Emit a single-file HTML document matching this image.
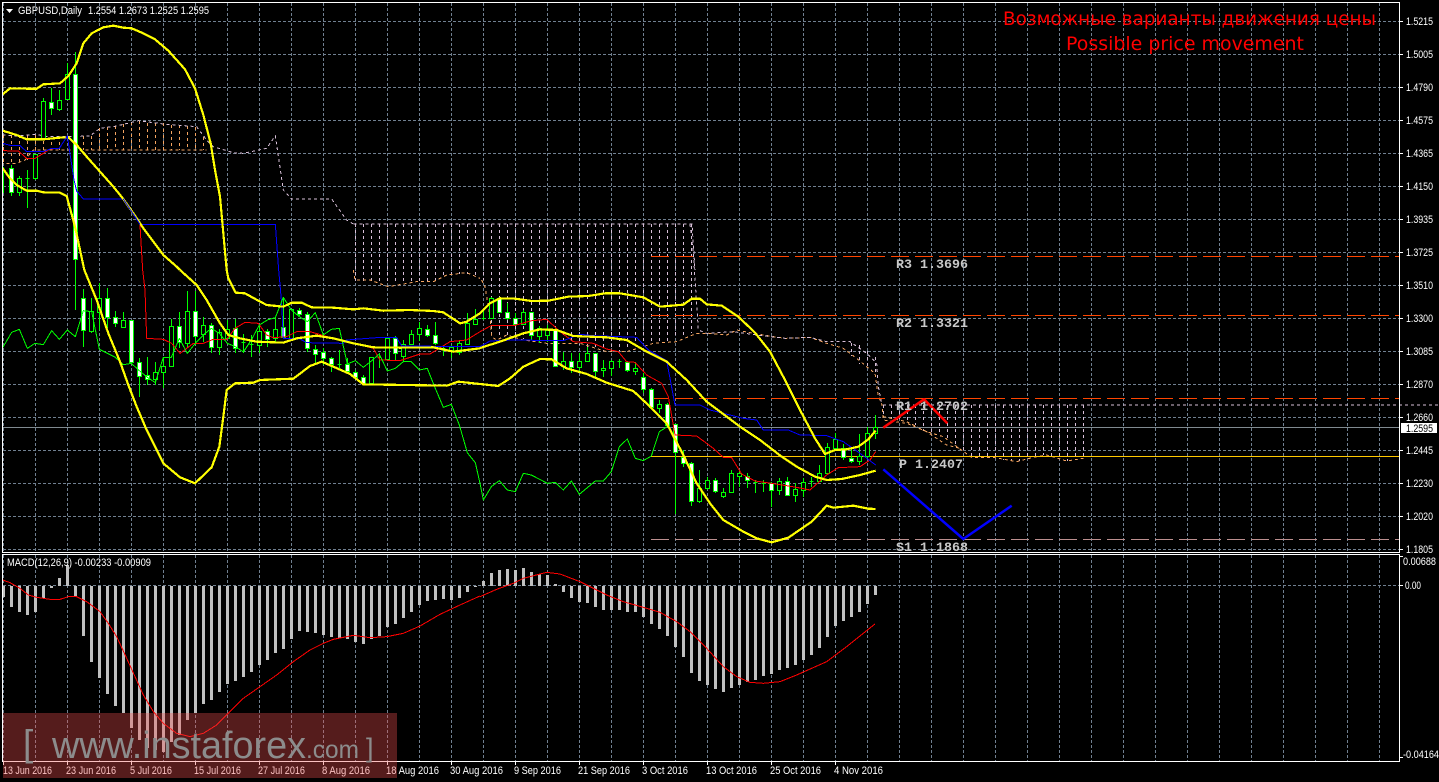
<!DOCTYPE html>
<html><head><meta charset="utf-8"><title>GBPUSD,Daily</title>
<style>
html,body{margin:0;padding:0;background:#000;width:1439px;height:782px;overflow:hidden}
svg{display:block;position:absolute;left:0;top:0}
polyline{fill:none;vector-effect:non-scaling-stroke;stroke-linejoin:round}
.y{stroke:#ff0;stroke-width:2.2px}.r{stroke:#f00;stroke-width:1px}.b{stroke:#00f;stroke-width:1px}.g{stroke:#0f0;stroke-width:1px}
.th{stroke:#d8bfd8;stroke-width:1px;stroke-dasharray:3 3}.sa{stroke:#f4a460;stroke-width:1px;stroke-dasharray:3 3}
text{font-family:"Liberation Sans",sans-serif;fill:#fff;font-size:11px}
.p{font-family:"Liberation Mono",monospace;font-weight:bold;font-size:13.33px;fill:#c8c8c8}
.t{font-family:"DejaVu Sans",sans-serif;font-size:19px;fill:#f00}
.w{fill:#8c8c8c;font-size:38px}
</style></head><body>
<svg width="1439" height="782" viewBox="0 0 1439 782" xmlns="http://www.w3.org/2000/svg">
<rect width="1439" height="782" fill="#000"/>
<g shape-rendering="crispEdges">
<path stroke="#708090" stroke-width="1" stroke-dasharray="3 2" fill="none" d="M3 21.5H1399M3 54.5H1399M3 87.5H1399M3 120.5H1399M3 153.5H1399M3 186.5H1399M3 219.5H1399M3 252.5H1399M3 285.5H1399M3 318.5H1399M3 351.5H1399M3 384.5H1399M3 417.5H1399M3 450.5H1399M3 483.5H1399M3 516.5H1399M3 549.5H1399M3 585.5H1399
M3.5 3V552M35.5 3V552M67.5 3V552M99.5 3V552M131.5 3V552M163.5 3V552M195.5 3V552M227.5 3V552M259.5 3V552M291.5 3V552M323.5 3V552M355.5 3V552M387.5 3V552M419.5 3V552M451.5 3V552M483.5 3V552M515.5 3V552M547.5 3V552M579.5 3V552M611.5 3V552M643.5 3V552M675.5 3V552M707.5 3V552M739.5 3V552M771.5 3V552M803.5 3V552M835.5 3V552M867.5 3V552M899.5 3V552M931.5 3V552M963.5 3V552M995.5 3V552M1027.5 3V552M1059.5 3V552M1091.5 3V552M1123.5 3V552M1155.5 3V552M1187.5 3V552M1219.5 3V552M1251.5 3V552M1283.5 3V552M1315.5 3V552M1347.5 3V552M1379.5 3V552
M3.5 555V761M35.5 555V761M67.5 555V761M99.5 555V761M131.5 555V761M163.5 555V761M195.5 555V761M227.5 555V761M259.5 555V761M291.5 555V761M323.5 555V761M355.5 555V761M387.5 555V761M419.5 555V761M451.5 555V761M483.5 555V761M515.5 555V761M547.5 555V761M579.5 555V761M611.5 555V761M643.5 555V761M675.5 555V761M707.5 555V761M739.5 555V761M771.5 555V761M803.5 555V761M835.5 555V761M867.5 555V761M899.5 555V761M931.5 555V761M963.5 555V761M995.5 555V761M1027.5 555V761M1059.5 555V761M1091.5 555V761M1123.5 555V761M1155.5 555V761M1187.5 555V761M1219.5 555V761M1251.5 555V761M1283.5 555V761M1315.5 555V761M1347.5 555V761M1379.5 555V761"/>

<!-- kumo verticals -->
<path stroke="#f4a460" stroke-width="1" stroke-dasharray="3 3" fill="none" d="M3.5 135V163M11.5 135V163M19.5 135V163M27.5 135V160M35.5 135V150M43.5 135V150M51.5 142V150M59.5 142V150M83.5 136V150M91.5 136V150M99.5 128V150M107.5 127V150M115.5 126V150M123.5 124V150M131.5 122V150M139.5 121V150M147.5 123V150M155.5 123V150M163.5 123V150M171.5 125V150M179.5 125V150M187.5 126V150M195.5 127V150M203.5 137V150"/>
<path stroke="#d8bfd8" stroke-width="1" stroke-dasharray="3 3" fill="none" d="M355.5 224V281M363.5 224V282M371.5 224V282M379.5 224V282M387.5 224V284M395.5 224V283M403.5 224V282M411.5 224V282M419.5 224V282M427.5 224V282M435.5 224V280M443.5 224V278M451.5 224V276M459.5 224V274M467.5 224V274M475.5 224V278M483.5 224V280M491.5 224V334M499.5 224V338M507.5 224V336M515.5 224V338M523.5 224V339M531.5 224V340M539.5 224V342M547.5 224V343M555.5 224V343M563.5 224V343M571.5 224V343M579.5 224V345M587.5 224V347M595.5 224V350M603.5 224V351M611.5 224V351M619.5 224V351M627.5 224V348M635.5 224V346M643.5 224V344M651.5 224V343M659.5 224V342M667.5 224V341M675.5 224V338M683.5 224V335M691.5 224V333
M883.5 405V417M891.5 405V418M899.5 405V419M907.5 405V421M915.5 405V425M923.5 405V431M931.5 405V434M939.5 405V435M947.5 405V440M955.5 405V447M963.5 405V452M971.5 405V457M979.5 405V458M987.5 405V458M995.5 405V459M1003.5 405V460M1011.5 405V461M1019.5 405V461M1027.5 405V459M1035.5 405V457M1043.5 405V455M1051.5 405V456M1059.5 405V459M1067.5 405V461M1075.5 405V460M1083.5 405V458
M851.5 343V356M859.5 345V364M867.5 351V368M875.5 357V373"/>

<g fill="none" transform="scale(.33333)">
<polyline class="th" points="8,405 50,408 110,403 140,410 200,410 270,408 300,385 350,378 415,362 490,372 590,380 620,420 640,440 700,458 730,460 800,445 826,407 850,570 875,597 995,597 1040,660 1060,672"/>
<polyline class="sa" points="8,430 8,490 50,490 75,480 100,450 300,450 620,450"/>
<polyline class="th" points="1060,672 2076,672 2076,672 2085,810"/>
<polyline class="th" points="2649,1215 4449,1215 4449,1377"/>
</g>
<g transform="translate(480,200) scale(.33333)">
<polyline class="sa" points="5,240 15,260 30,350 35,410 50,420 80,405 130,420 200,430 300,430 380,455 440,455 490,440 520,430 590,425 650,400 680,400 740,405 770,390 820,400 880,410 915,415 990,412 1040,430 1090,445 1130,475 1160,500 1185,520 1195,590 1205,610 1210,660 1280,670 1340,695 1400,735 1440,745"/>
<polyline class="th" points="630,72 640,160 655,390 680,400 760,395 830,405 915,415 990,412 1040,425 1090,425 1110,425 1160,460 1190,490 1195,560 1205,610"/>
</g>
<g transform="translate(0,270) scale(.33333)">
<polyline class="sa" points="1060,0 1065,30 1110,30 1165,50 1250,35 1300,35 1340,15 1400,8 1440,25"/>
</g>
<g transform="translate(800,380) scale(.33333)">
<polyline class="sa" points="250,110 320,125 380,155 430,170 470,200 515,232 580,232 650,245 700,232 740,225 800,243 850,235"/>
</g>

<!-- levels -->
<path stroke="#808a90" stroke-width="1" d="M3 427.5H1399"/>
<path stroke="#ff4500" stroke-width="1" stroke-dasharray="18 6" fill="none" d="M651 256.5H1399M651 315.5H1399M651 398.5H1399"/>
<path stroke="#bc8f8f" stroke-width="1" stroke-dasharray="18 6" fill="none" d="M651 539.5H1399"/>
<path stroke="#ffc800" stroke-width="1" d="M651 456.5H1399"/>

<!-- wicks -->
<path stroke="#0f0" stroke-width="1" fill="none" d="M3.5 167V193M11.5 165V196M19.5 176V196M27.5 170V208M25.5 178.5h4M35.5 154V180M43.5 98V138M51.5 88V115M59.5 90V111M67.5 63V100M75.5 52V310M83.5 289V347M91.5 298V333M99.5 283V330M107.5 288V328M115.5 311V327M123.5 312V327M131.5 320V362M139.5 358V397M147.5 357V385M155.5 362V385M163.5 357V388M171.5 319V366M179.5 312V348M187.5 291V348M195.5 291V345M203.5 317V342M211.5 323V353M219.5 329V355M227.5 320V338M235.5 319V353M243.5 334V353M241.5 342.5h4M251.5 335V357M249.5 344.5h4M259.5 325V353M267.5 329V347M275.5 318V342M283.5 297V338M291.5 309V338M299.5 308V316M307.5 312V352M315.5 345V363M323.5 348V365M331.5 357V372M339.5 350V368M337.5 364.5h4M347.5 358V372M355.5 370V378M363.5 375V384M371.5 357V384M379.5 353V368M377.5 357.5h4M387.5 338V360M395.5 336V360M403.5 340V361M411.5 330V345M419.5 322V341M427.5 325V337M435.5 322V345M443.5 345V356M441.5 348.5h4M451.5 345V358M459.5 341V355M467.5 313V345M475.5 309V325M483.5 310V320M481.5 318.5h4M491.5 297V318M499.5 297V313M507.5 303V320M515.5 313V324M523.5 310V325M531.5 312V340M539.5 326V343M547.5 325V342M555.5 328V366M563.5 352V370M571.5 353V373M579.5 353V373M587.5 347V362M595.5 353V378M603.5 360V377M611.5 360V376M619.5 359V368M617.5 361.5h4M627.5 362V372M635.5 362V375M643.5 373V393M651.5 388V408M659.5 400V413M667.5 403V427M675.5 424V514M683.5 450V467M691.5 462V506M699.5 470V503M707.5 477V490M715.5 478V493M723.5 488V498M731.5 470V493M739.5 470V487M747.5 473V488M755.5 480V493M753.5 482.5h4M763.5 480V492M761.5 483.5h4M771.5 482V507M779.5 478V495M787.5 477V496M795.5 483V502M803.5 478V497M811.5 477V487M809.5 481.5h4M819.5 465V482M827.5 443V473M835.5 433V448M843.5 444V460M851.5 448V463M859.5 434V465M867.5 427V458M875.5 415V439"/>
<!-- white bodies -->
<path stroke="#0f0" stroke-width="1" fill="#fff" d="M9.5 168.5h4v24h-4zM49.5 102.5h4v6h-4zM73.5 74.5h4v185h-4zM81.5 298.5h4v32h-4zM105.5 298.5h4v19h-4zM113.5 317.5h4v6h-4zM129.5 320.5h4v42h-4zM137.5 362.5h4v14h-4zM145.5 375.5h4v4h-4zM177.5 326.5h4v16h-4zM193.5 311.5h4v25h-4zM209.5 325.5h4v22h-4zM233.5 328.5h4v20h-4zM265.5 331.5h4v8h-4zM281.5 327.5h4v10h-4zM297.5 310.5h4v4h-4zM305.5 314.5h4v34h-4zM313.5 349.5h4v5h-4zM321.5 352.5h4v6h-4zM329.5 358.5h4v6h-4zM345.5 364.5h4v7h-4zM353.5 372.5h4v5h-4zM361.5 377.5h4v6h-4zM393.5 338.5h4v15h-4zM425.5 329.5h4v6h-4zM433.5 335.5h4v8h-4zM497.5 298.5h4v14h-4zM505.5 312.5h4v6h-4zM513.5 318.5h4v6h-4zM529.5 312.5h4v23h-4zM553.5 329.5h4v37h-4zM569.5 361.5h4v6h-4zM593.5 353.5h4v18h-4zM625.5 362.5h4v8h-4zM641.5 377.5h4v12h-4zM649.5 389.5h4v18h-4zM665.5 404.5h4v21h-4zM673.5 424.5h4v28h-4zM681.5 457.5h4v6h-4zM689.5 463.5h4v38h-4zM713.5 480.5h4v11h-4zM745.5 476.5h4v4h-4zM769.5 483.5h4v7h-4zM785.5 481.5h4v14h-4zM841.5 448.5h4v9h-4zM849.5 458.5h4v3h-4z"/>
<!-- hollow bodies -->
<path stroke="#0f0" stroke-width="1" fill="#000" d="M17.5 178.5h4v14h-4zM33.5 154.5h4v24h-4zM41.5 101.5h4v37h-4zM57.5 100.5h4v9h-4zM65.5 74.5h4v25h-4zM89.5 311.5h4v20h-4zM97.5 298.5h4v14h-4zM121.5 320.5h4v7h-4zM153.5 372.5h4v7h-4zM161.5 366.5h4v6h-4zM169.5 326.5h4v40h-4zM185.5 311.5h4v32h-4zM201.5 325.5h4v9h-4zM217.5 332.5h4v15h-4zM225.5 329.5h4v9h-4zM257.5 331.5h4v14h-4zM273.5 329.5h4v9h-4zM289.5 309.5h4v29h-4zM369.5 357.5h4v26h-4zM385.5 338.5h4v21h-4zM401.5 344.5h4v12h-4zM409.5 334.5h4v10h-4zM417.5 328.5h4v6h-4zM449.5 347.5h4v3h-4zM457.5 343.5h4v9h-4zM465.5 323.5h4v21h-4zM473.5 319.5h4v5h-4zM489.5 298.5h4v20h-4zM521.5 312.5h4v12h-4zM537.5 328.5h4v8h-4zM545.5 330.5h4v5h-4zM561.5 361.5h4v5h-4zM577.5 361.5h4v6h-4zM585.5 353.5h4v8h-4zM601.5 368.5h4v2h-4zM609.5 361.5h4v7h-4zM633.5 368.5h4v3h-4zM657.5 404.5h4v4h-4zM697.5 488.5h4v13h-4zM705.5 480.5h4v8h-4zM721.5 492.5h4v4h-4zM729.5 473.5h4v19h-4zM737.5 473.5h4v3h-4zM777.5 481.5h4v9h-4zM793.5 489.5h4v6h-4zM801.5 482.5h4v8h-4zM817.5 473.5h4v8h-4zM825.5 447.5h4v26h-4zM833.5 439.5h4v9h-4zM857.5 456.5h4v5h-4zM865.5 433.5h4v23h-4zM873.5 427.5h4v6h-4z"/>

<!-- indicators, thin -->
<g transform="scale(.33333)">
<polyline class="r" points="8,452 55,453 80,475 105,475 130,460 150,447 178,445"/>
<polyline class="r" points="420,675 428,810"/>
<polyline class="b" points="8,430 30,436 60,437 80,455 130,455 155,445 178,445 202,408 222,540 230,573 250,597 370,597 420,673 826,673 836,810"/>
</g>
<g transform="translate(0,270) scale(.33333)">
<polyline class="r" points="428,0 435,60 440,205 490,208 515,220 540,250 580,220 610,220 640,208 680,208 705,175 735,157 775,160 800,195 820,203 860,200 890,185 930,185 1000,205 1060,220 1120,235 1140,270 1200,272 1260,252 1290,252 1350,215 1400,210 1440,185"/>
<polyline class="b" points="836,0 845,100 850,205 900,207 920,218 1030,220 1040,210 1130,203 1190,203 1205,228 1440,230"/>
<polyline class="g" points="8,233 35,187 58,178 82,235 105,220 130,224 155,182 178,208 202,180 226,200 250,122 275,125 298,238 322,250 346,262 370,284 394,280 418,302 442,322 466,338 490,262 514,262 538,205 562,250 586,220 610,195 634,175 658,190 682,220 706,230 730,246 754,210 778,165 802,150 826,143 850,82 874,120 898,140 922,155 946,128 970,195 994,178 1018,175 1042,282 1066,272 1090,292 1114,273 1138,252 1162,303 1186,295 1210,275 1234,275 1258,300 1282,295 1306,355 1330,412 1354,403 1378,465 1402,548 1426,578 1440,640"/>
</g>
<g transform="translate(480,200) scale(.33333)">
<polyline class="r" points="0,395 35,376 105,376 155,362 200,358 240,395 280,425 340,430 380,447 415,455 440,485 465,487 500,525 545,550 565,590 585,705 650,708 700,745 730,772 755,773 785,822 825,843 875,850 950,862 990,870 1040,825 1075,803 1140,800 1170,780 1187,755"/>
<polyline class="b" points="0,440 30,423 100,420 250,422 300,403 340,407 470,412 505,450 560,482 585,615 660,615 690,630 790,655 830,660 850,690 925,690 960,705 1040,707 1090,725 1140,760 1187,795"/>
<polyline class="g" points="0,850 10,900 34,860 58,842 82,870 106,875 130,820 154,825 202,850 226,847 250,870 274,843 298,883 346,843 370,843 394,815 418,740 442,717 466,775 490,782 514,768 538,695 562,680"/>
</g>

<!-- bollinger -->
<g transform="scale(.33333)">
<polyline class="y" points="8,283 30,265 80,266 110,266 130,253 180,250 205,228 230,190 250,130 275,100 310,82 340,77 370,83 395,85 430,100 465,118 505,152 530,180 555,208 585,265 610,345 632,430 645,510 660,590 670,700 680,810"/>
<polyline class="y" points="8,392 50,405 80,418 130,418 180,413 205,412 230,435 260,470 300,515 340,560 370,597 400,640 430,685 490,765 530,800 540,810"/>
<polyline class="y" points="8,505 30,535 50,555 80,572 110,572 130,577 180,578 200,588 225,680 253,810"/>
<polyline class="b" points="178,445 202,408 222,540"/>
<polyline class="b" points="370,597 420,673"/>
</g>
<g transform="translate(0,270) scale(.33333)">
<polyline class="y" points="680,0 685,25 707,68 735,70 775,92 800,105 850,110 875,98 905,98 935,112 1000,113 1060,118 1090,115 1150,122 1230,120 1300,123 1330,127 1380,160 1400,155 1440,130"/>
<polyline class="y" points="540,0 590,45 620,90 660,160 685,195 720,205 770,215 850,218 890,205 950,197 1000,205 1060,220 1120,232 1200,233 1300,232 1360,245 1440,235"/>
<polyline class="y" points="253,0 290,90 325,190 360,275 385,345 410,410 440,480 490,580 540,622 585,640 635,592 658,530 670,440 680,360 705,340 760,338 780,330 880,326 930,288 965,275 1000,290 1050,312 1090,343 1340,347 1375,335 1440,342"/>
</g>
<g transform="translate(480,200) scale(.33333)">
<polyline class="y" points="0,340 30,310 60,295 105,296 155,303 205,302 265,290 325,288 375,280 420,280 490,292 540,320 610,314 635,296 660,296 680,313 725,317 775,350 825,398 870,455 915,540 960,630 1005,715 1035,762 1065,750 1100,748 1135,740 1165,718 1187,692"/>
<polyline class="y" points="0,444 60,425 130,400 180,388 230,390 280,408 380,412 440,420 500,455 560,485 620,540 680,605 720,635 780,680 840,720 905,770 950,800 1005,830 1040,840 1085,837 1140,825 1187,812"/>
<polyline class="y" points="0,552 55,558 90,535 130,500 180,477 215,478 260,505 320,522 380,548 460,573 510,620 560,670 610,765 650,850 690,910 730,960 790,995 830,1015 875,1027 925,1013 995,965 1040,917 1060,923 1120,917 1165,926 1187,927"/>
</g>

<!-- MACD bars -->
<path fill="#c0c0c0" d="M2 586h3v11h-3zM10 586h3v21h-3zM18 586h3v26h-3zM26 586h3v29h-3zM34 586h3v26h-3zM42 586h3v12h-3zM50 586h3v2h-3zM58 578h3v8h-3zM66 565h3v21h-3zM74 586h3v11h-3zM82 586h3v50h-3zM90 586h3v76h-3zM98 586h3v92h-3zM106 586h3v108h-3zM114 586h3v120h-3zM122 586h3v127h-3zM130 586h3v142h-3zM138 586h3v154h-3zM146 586h3v162h-3zM154 586h3v164h-3zM162 586h3v166h-3zM170 586h3v156h-3zM178 586h3v149h-3zM186 586h3v134h-3zM194 586h3v127h-3zM202 586h3v118h-3zM210 586h3v114h-3zM218 586h3v106h-3zM226 586h3v98h-3zM234 586h3v95h-3zM242 586h3v91h-3zM250 586h3v86h-3zM258 586h3v79h-3zM266 586h3v74h-3zM274 586h3v67h-3zM282 586h3v63h-3zM290 586h3v53h-3zM298 586h3v45h-3zM306 586h3v46h-3zM314 586h3v47h-3zM322 586h3v49h-3zM330 586h3v51h-3zM338 586h3v52h-3zM346 586h3v53h-3zM354 586h3v56h-3zM362 586h3v58h-3zM370 586h3v53h-3zM378 586h3v50h-3zM386 586h3v41h-3zM394 586h3v38h-3zM402 586h3v32h-3zM410 586h3v26h-3zM418 586h3v19h-3zM426 586h3v15h-3zM434 586h3v14h-3zM442 586h3v13h-3zM450 586h3v14h-3zM458 586h3v12h-3zM466 586h3v6h-3zM474 586h3v1h-3zM482 581h3v5h-3zM490 573h3v13h-3zM498 570h3v16h-3zM506 569h3v17h-3zM514 570h3v16h-3zM522 568h3v18h-3zM530 572h3v14h-3zM538 574h3v12h-3zM546 575h3v11h-3zM554 584h3v2h-3zM562 586h3v6h-3zM570 586h3v12h-3zM578 586h3v16h-3zM586 586h3v17h-3zM594 586h3v21h-3zM602 586h3v24h-3zM610 586h3v24h-3zM618 586h3v24h-3zM626 586h3v26h-3zM634 586h3v26h-3zM642 586h3v31h-3zM650 586h3v38h-3zM658 586h3v43h-3zM666 586h3v50h-3zM674 586h3v61h-3zM682 586h3v71h-3zM690 586h3v87h-3zM698 586h3v95h-3zM706 586h3v99h-3zM714 586h3v103h-3zM722 586h3v106h-3zM730 586h3v102h-3zM738 586h3v99h-3zM746 586h3v96h-3zM754 586h3v94h-3zM762 586h3v90h-3zM770 586h3v88h-3zM778 586h3v84h-3zM786 586h3v82h-3zM794 586h3v79h-3zM802 586h3v74h-3zM810 586h3v69h-3zM818 586h3v62h-3zM826 586h3v51h-3zM834 586h3v40h-3zM842 586h3v35h-3zM850 586h3v31h-3zM858 586h3v26h-3zM866 586h3v18h-3zM874 586h3v9h-3z"/>
<g transform="translate(0,545) scale(.33333)">
<polyline class="r" points="8,105 30,113 60,130 85,150 110,157 150,163 180,163 205,155 230,155 260,170 300,200 325,235 350,275 380,340 405,395 430,450 460,500 490,535 530,565 570,575 610,565 650,540 680,510 730,460 780,425 830,390 880,350 930,315 970,295 1000,283 1060,271 1110,278 1160,275 1210,265 1260,243 1320,208 1380,180 1440,153"/>
</g>
<g transform="translate(480,550) scale(.33333)">
<polyline class="r" points="0,140 50,118 100,100 130,85 200,67 240,72 300,95 340,115 380,135 430,155 490,172 540,187 590,215 630,245 680,295 730,350 770,380 810,397 850,400 900,395 950,375 1040,335 1100,290 1185,222"/>
</g>

<!-- frames and ticks -->
<path stroke="#fff" stroke-width="1" fill="none" d="M2.5 2.5H1399.5V552.5H2.5ZM2.5 554.5H1399.5V761.5H2.5Z"/>
<path stroke="#fff" stroke-width="1" fill="none" d="M1400 21.5h3M1400 54.5h3M1400 87.5h3M1400 120.5h3M1400 153.5h3M1400 186.5h3M1400 219.5h3M1400 252.5h3M1400 285.5h3M1400 318.5h3M1400 351.5h3M1400 384.5h3M1400 417.5h3M1400 450.5h3M1400 483.5h3M1400 516.5h3M1400 549.5h3M1400 556.5h3M1400 585.5h3M1400 757.5h3M3.5 762v3M67.5 762v3M131.5 762v3M195.5 762v3M259.5 762v3M323.5 762v3M387.5 762v3M451.5 762v3M515.5 762v3M579.5 762v3M643.5 762v3M707.5 762v3M771.5 762v3M835.5 762v3"/>
</g>

<!-- price box -->
<rect x="1401" y="423" width="36" height="10" fill="#fff"/>

<!-- arrows -->
<polyline points="883.3,427.7 924,399.3 947.3,423.3" style="stroke:#f00;stroke-width:2.5px"/>
<polyline points="883.3,469.3 963.3,539 1011.7,505.7" style="stroke:#00f;stroke-width:2.5px"/>

<!-- pivot labels -->
<text class="p" x="896" y="268">R3 1.3696</text>
<text class="p" x="896" y="327">R2 1.3321</text>
<text class="p" x="896" y="410">R1 1.2702</text>
<text class="p" x="899" y="468">P 1.2407</text>
<text class="p" x="896" y="551">S1 1.1868</text>

<!-- titles -->
<polygon points="6,9 13,9 9.5,13" fill="#fff"/>
<text x="18" y="14" textLength="64" lengthAdjust="spacingAndGlyphs">GBPUSD,Daily</text>
<text x="88" y="14" textLength="121" lengthAdjust="spacingAndGlyphs">1.2554 1.2673 1.2525 1.2595</text>
<text x="7" y="566" textLength="144" lengthAdjust="spacingAndGlyphs">MACD(12,26,9) -0.00233 -0.00909</text>
<text class="t" x="1003" y="25" textLength="373" lengthAdjust="spacingAndGlyphs">Возможные варианты движения цены</text>
<text class="t" x="1066" y="50" textLength="238" lengthAdjust="spacingAndGlyphs">Possible price movement</text>

<!-- price axis -->
<g>
<text x="1406" y="25" textLength="27" lengthAdjust="spacingAndGlyphs">1.5215</text>
<text x="1406" y="58" textLength="27" lengthAdjust="spacingAndGlyphs">1.5005</text>
<text x="1406" y="91" textLength="27" lengthAdjust="spacingAndGlyphs">1.4790</text>
<text x="1406" y="124" textLength="27" lengthAdjust="spacingAndGlyphs">1.4575</text>
<text x="1406" y="157" textLength="27" lengthAdjust="spacingAndGlyphs">1.4365</text>
<text x="1406" y="190" textLength="27" lengthAdjust="spacingAndGlyphs">1.4150</text>
<text x="1406" y="223" textLength="27" lengthAdjust="spacingAndGlyphs">1.3935</text>
<text x="1406" y="256" textLength="27" lengthAdjust="spacingAndGlyphs">1.3725</text>
<text x="1406" y="289" textLength="27" lengthAdjust="spacingAndGlyphs">1.3510</text>
<text x="1406" y="322" textLength="27" lengthAdjust="spacingAndGlyphs">1.3300</text>
<text x="1406" y="355" textLength="27" lengthAdjust="spacingAndGlyphs">1.3085</text>
<text x="1406" y="388" textLength="27" lengthAdjust="spacingAndGlyphs">1.2870</text>
<text x="1406" y="421" textLength="27" lengthAdjust="spacingAndGlyphs">1.2660</text>
<text x="1406" y="432" textLength="27" lengthAdjust="spacingAndGlyphs" style="fill:#000">1.2595</text>
<text x="1406" y="454" textLength="27" lengthAdjust="spacingAndGlyphs">1.2445</text>
<text x="1406" y="487" textLength="27" lengthAdjust="spacingAndGlyphs">1.2230</text>
<text x="1406" y="520" textLength="27" lengthAdjust="spacingAndGlyphs">1.2020</text>
<text x="1406" y="553" textLength="27" lengthAdjust="spacingAndGlyphs">1.1805</text>
<text x="1403" y="565" textLength="33" lengthAdjust="spacingAndGlyphs">0.00688</text>
<text x="1405" y="589" textLength="16" lengthAdjust="spacingAndGlyphs">0.00</text>
<text x="1403" y="758" textLength="36" lengthAdjust="spacingAndGlyphs">-0.04164</text>
</g>

<!-- time axis -->
<g>
<text x="3" y="774" textLength="49" lengthAdjust="spacingAndGlyphs">13 Jun 2016</text>
<text x="66" y="774" textLength="50" lengthAdjust="spacingAndGlyphs">23 Jun 2016</text>
<text x="130" y="774" textLength="42" lengthAdjust="spacingAndGlyphs">5 Jul 2016</text>
<text x="194" y="774" textLength="47" lengthAdjust="spacingAndGlyphs">15 Jul 2016</text>
<text x="258" y="774" textLength="47" lengthAdjust="spacingAndGlyphs">27 Jul 2016</text>
<text x="322" y="774" textLength="48" lengthAdjust="spacingAndGlyphs">8 Aug 2016</text>
<text x="386" y="774" textLength="53" lengthAdjust="spacingAndGlyphs">18 Aug 2016</text>
<text x="450" y="774" textLength="53" lengthAdjust="spacingAndGlyphs">30 Aug 2016</text>
<text x="514" y="774" textLength="47" lengthAdjust="spacingAndGlyphs">9 Sep 2016</text>
<text x="578" y="774" textLength="52" lengthAdjust="spacingAndGlyphs">21 Sep 2016</text>
<text x="642" y="774" textLength="46" lengthAdjust="spacingAndGlyphs">3 Oct 2016</text>
<text x="706" y="774" textLength="51" lengthAdjust="spacingAndGlyphs">13 Oct 2016</text>
<text x="770" y="774" textLength="51" lengthAdjust="spacingAndGlyphs">25 Oct 2016</text>
<text x="834" y="774" textLength="49" lengthAdjust="spacingAndGlyphs">4 Nov 2016</text>
</g>

<!-- watermark -->
<rect x="3" y="713" width="394" height="65" fill="#f35050" fill-opacity=".35"/>
<text class="w" x="23" y="756" style="font-size:37px">[</text>
<text class="w" x="52" y="758" textLength="254" lengthAdjust="spacingAndGlyphs">www.instaforex</text>
<text class="w" x="306" y="758" textLength="53" lengthAdjust="spacingAndGlyphs" style="font-size:25px">.com</text>
<text class="w" x="366" y="757" style="font-size:27px">]</text>
</svg>
</body></html>
